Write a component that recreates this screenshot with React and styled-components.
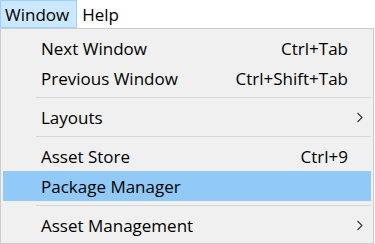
import React from 'react';
import styled, { createGlobalStyle } from 'styled-components';

const GlobalStyle = createGlobalStyle`
  html, body {
    margin: 0;
    padding: 0;
    background: #ffffff;
  }
  body {
    font-family: 'Open Sans', 'Noto Sans', sans-serif;
    color: #000;
  }
`;

const Page = styled.div`
  width: 375px;
  height: 244px;
  overflow: hidden;
  background: #ffffff;
`;

const MenuBar = styled.div`
  display: flex;
  height: 28px;
  background: #ffffff;
`;

const BarItem = styled.div`
  display: flex;
  align-items: center;
  height: 28px;
  box-sizing: border-box;
  padding: 1px 7px 0 4px;
  font-size: 17px;
  border: 1px solid ${({ open }) => (open ? '#99d1ff' : 'transparent')};
  background: ${({ open }) => (open ? '#cce8ff' : 'transparent')};
`;

const Dropdown = styled.div`
  display: flex;
  flex-direction: column;
  width: 374px;
  box-sizing: border-box;
  border: 1px solid #cccccc;
  background: #f0f0f0;
  padding: 4px 2px 3px 2px;
`;

const Item = styled.div`
  display: grid;
  grid-template-columns: 1fr auto 23px;
  align-items: center;
  height: 30px;
  padding-left: 38px;
  font-size: 17px;
  background: ${({ active }) => (active ? '#91c9f7' : 'transparent')};
`;

const Shortcut = styled.span`
  text-align: right;
`;

const Arrow = styled.span`
  display: flex;
  justify-content: center;
`;

const Separator = styled.div`
  height: 1px;
  margin: 4px 0 4px 33px;
  background: #d7d7d7;
`;

const Chevron = () => (
  <svg width="8" height="11" viewBox="0 0 8 11">
    <path d="M1.5 1 L6 5.5 L1.5 10" fill="none" stroke="#333" strokeWidth="1.1" />
  </svg>
);

export default function App() {
  return (
    <Page>
      <GlobalStyle />
      <MenuBar>
        <BarItem open>Window</BarItem>
        <BarItem>Help</BarItem>
      </MenuBar>
      <Dropdown>
        <Item>
          <span>Next Window</span>
          <Shortcut>Ctrl+Tab</Shortcut>
          <Arrow />
        </Item>
        <Item>
          <span>Previous Window</span>
          <Shortcut>Ctrl+Shift+Tab</Shortcut>
          <Arrow />
        </Item>
        <Separator />
        <Item>
          <span>Layouts</span>
          <Shortcut />
          <Arrow><Chevron /></Arrow>
        </Item>
        <Separator />
        <Item>
          <span>Asset Store</span>
          <Shortcut>Ctrl+9</Shortcut>
          <Arrow />
        </Item>
        <Item active>
          <span>Package Manager</span>
          <Shortcut />
          <Arrow />
        </Item>
        <Separator />
        <Item>
          <span>Asset Management</span>
          <Shortcut />
          <Arrow><Chevron /></Arrow>
        </Item>
      </Dropdown>
    </Page>
  );
}
